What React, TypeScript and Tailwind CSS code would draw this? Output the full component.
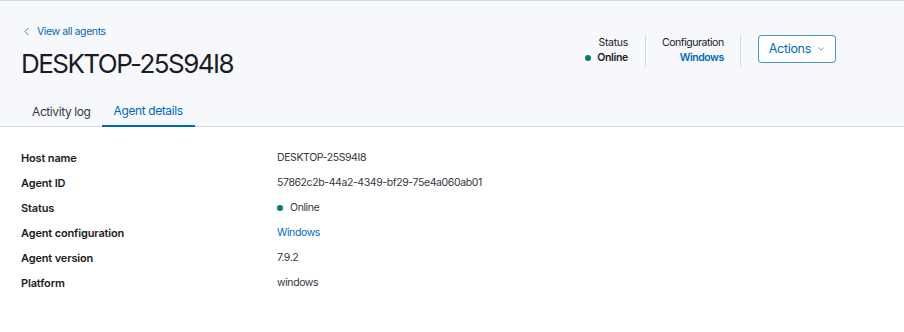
import { ChevronLeft, ChevronDown } from 'lucide-react';

const details = [
  { label: 'Host name', value: 'DESKTOP-25S94I8' },
  { label: 'Agent ID', value: '57862c2b-44a2-4349-bf29-75e4a060ab01' },
  { label: 'Status', value: 'Online', status: true },
  { label: 'Agent configuration', value: 'Windows', link: true },
  { label: 'Agent version', value: '7.9.2' },
  { label: 'Platform', value: 'windows' },
];

export default function App() {
  return (
    <div className="min-h-[332px] bg-white text-[#1a1c21] font-['Inter',sans-serif]">
      {/* Header */}
      <div className="bg-[#f7f8fc] border-t border-b border-[#d3dae6]">
        <div className="flex justify-between px-[21px] pt-[23px]">
          <div>
            <a className="flex items-center gap-[4px] text-[10.5px] tracking-[-0.4px] text-[#006bb4] -ml-[1px]">
              <ChevronLeft className="w-[13px] h-[13px]" strokeWidth={1.5} />
              View all agents
            </a>
            <h1 className="text-[26px] leading-[36px] mt-[6px] tracking-[-1.55px]">DESKTOP-25S94I8</h1>
          </div>
          <div className="flex items-start pt-[11px] mr-[47px]">
            <div className="flex flex-col items-end text-[10.5px] tracking-[-0.3px] pr-[17px] border-r border-[#d3dae6] h-[32px]">
              <span className="leading-[15px]">Status</span>
              <span className="flex items-center gap-[6px] font-semibold leading-[15px]">
                <span className="w-[6px] h-[6px] rounded-full bg-[#017d73]" />
                Online
              </span>
            </div>
            <div className="flex flex-col items-end text-[10.5px] tracking-[-0.45px] px-4 border-r border-[#d3dae6] h-[32px]">
              <span className="leading-[15px]">Configuration</span>
              <span className="font-semibold leading-[15px] text-[#006bb4]">Windows</span>
            </div>
            <button className="ml-[17px] h-[28px] pl-[10px] pr-[9px] flex items-center gap-[5px] rounded-[4px] border border-[#006bb4]/70 bg-white text-[12.5px] tracking-[-0.3px] text-[#006bb4]">
              Actions
              <ChevronDown className="w-[10px] h-[10px]" strokeWidth={1.5} />
            </button>
          </div>
        </div>
        <div className="flex px-[20px] mt-[16px] -mb-px">
          <div className="pl-[12px] pr-[11px] h-[29px] flex items-center text-[12px] tracking-[-0.4px] text-[#343741]">Activity log</div>
          <div className="px-[12px] h-[29px] flex items-center text-[12px] tracking-[-0.4px] text-[#006bb4] border-b-2 border-[#006bb4]">
            Agent details
          </div>
        </div>
      </div>

      {/* Details */}
      <div className="px-[21px] pt-[19px]">
        {details.map((row) => (
          <div key={row.label} className="flex h-[25px] items-center">
            <div className="w-[256px] text-[11px] font-semibold tracking-[-0.15px]">{row.label}</div>
            <div className="text-[10.5px] tracking-[-0.4px] text-[#343741] flex items-center gap-[7px]">
              {row.status && <span className="w-[6px] h-[6px] rounded-full bg-[#017d73]" />}
              <span className={row.link ? 'text-[#006bb4]' : ''}>{row.value}</span>
            </div>
          </div>
        ))}
      </div>
    </div>
  );
}
